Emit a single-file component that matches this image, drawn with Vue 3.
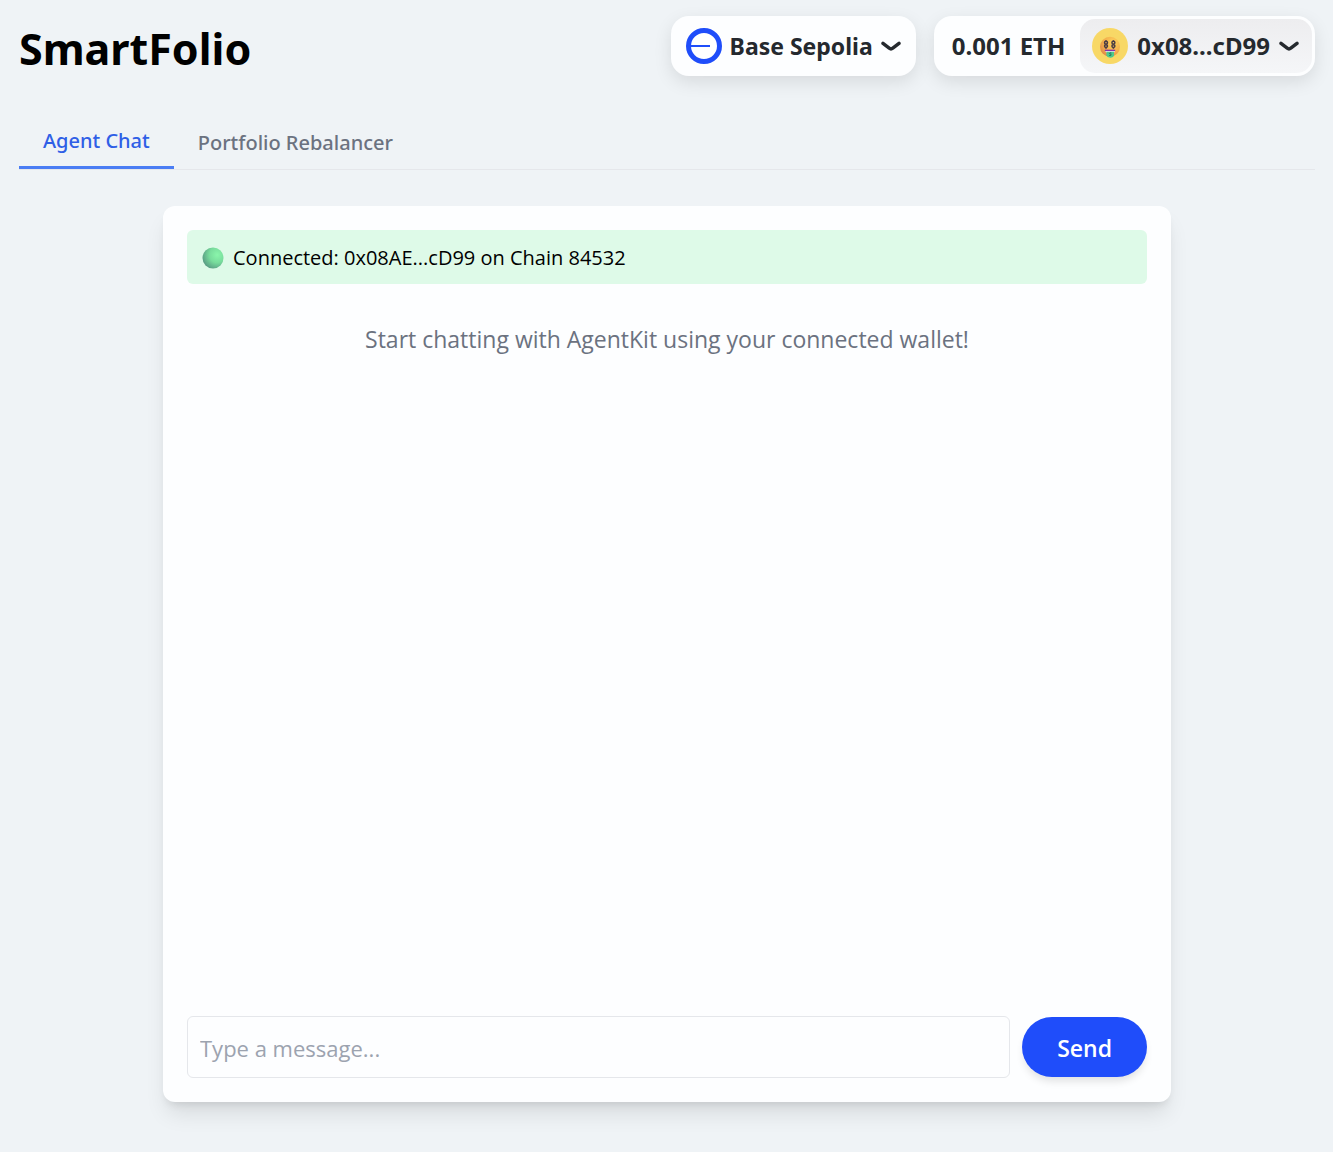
<script setup>
import { ref } from 'vue'

const tabs = ['Agent Chat', 'Portfolio Rebalancer']
const activeTab = ref(tabs[0])
const message = ref('')
</script>

<template>
  <div class="page">
    <header class="header">
      <h1 class="title">SmartFolio</h1>
      <div class="wallet">
        <button type="button" class="chain">
          <svg class="badge" viewBox="0 0 36 36" aria-hidden="true">
            <circle cx="18" cy="18" r="15.5" fill="#fff" stroke="#1f4dfa" stroke-width="5" />
            <path d="M4 18H24" stroke="#1f4dfa" stroke-width="2" />
          </svg>
          <span>Base Sepolia</span>
          <svg class="chevron" viewBox="0 0 20 12" aria-hidden="true">
            <path d="M2 3.4L8.2 8.2Q10 9.6 11.8 8.2L18 3.4" />
          </svg>
        </button>
        <button type="button" class="account">
          <span class="balance">0.001 ETH</span>
          <span class="address">
            <svg class="badge" viewBox="0 0 36 36" aria-hidden="true">
              <defs>
                <radialGradient id="face" cx="0.65" cy="0.3" r="0.8">
                  <stop offset="0" stop-color="#ffd45c" />
                  <stop offset="0.6" stop-color="#f3ad4c" />
                  <stop offset="1" stop-color="#dc8148" />
                </radialGradient>
              </defs>
              <circle cx="18" cy="18" r="18" fill="#f8d866" />
              <circle cx="18" cy="18.8" r="10" fill="url(#face)" />
              <g fill="none" stroke="#493b45" stroke-width="1.5">
                <ellipse cx="14" cy="14.7" rx="1.5" ry="1.4" />
                <ellipse cx="14" cy="18.1" rx="1.5" ry="1.4" />
                <path d="M14 12.2V13.6M14 19V20.8" />
                <ellipse cx="21.4" cy="14.7" rx="1.5" ry="1.4" />
                <ellipse cx="21.4" cy="18.1" rx="1.5" ry="1.4" />
                <path d="M21.4 12.2V13.6M21.4 19V20.8" />
              </g>
              <path d="M13 22.2H23.2Q23 25 18 25.5Q13.5 25 13 22.2Z" fill="#fff" />
              <path d="M12.8 22.4H23.2" stroke="#8c31a9" stroke-width="1.5" />
              <path d="M14.4 23.8H22V27.2Q21.6 29.6 18.2 29.8Q15 29.6 14.4 27.2Z" fill="#4cc98d" />
              <path d="M19.4 25Q17.4 24.5 17.4 25.5L19.2 26.6Q19.2 28 17.2 27.4" fill="none" stroke="#286f62" />
            </svg>
            <span>0x08...cD99</span>
            <svg class="chevron" viewBox="0 0 20 12" aria-hidden="true">
              <path d="M2 3.4L8.2 8.2Q10 9.6 11.8 8.2L18 3.4" />
            </svg>
          </span>
        </button>
      </div>
    </header>

    <nav class="tabs">
      <button
        v-for="tab in tabs"
        :key="tab"
        type="button"
        class="tab"
        :class="{ active: tab === activeTab }"
        @click="activeTab = tab"
      >{{ tab }}</button>
    </nav>

    <main class="card">
      <div class="status">
        <svg class="dot" viewBox="0 0 22 22" aria-hidden="true">
          <defs>
            <radialGradient id="orb" cx="0.7" cy="0.35" r="0.75">
              <stop offset="0" stop-color="#8af5ab" />
              <stop offset="0.5" stop-color="#78dc9c" />
              <stop offset="1" stop-color="#589a83" />
            </radialGradient>
          </defs>
          <circle cx="11" cy="11" r="10.5" fill="url(#orb)" />
        </svg>
        <span>Connected: 0x08AE...cD99 on Chain 84532</span>
      </div>
      <p class="hint">Start chatting with AgentKit using your connected wallet!</p>
      <form class="composer" @submit.prevent="message = ''">
        <input v-model="message" class="field" type="text" aria-label="Message" placeholder="Type a message..." />
        <button type="submit" class="send">Send</button>
      </form>
    </main>
  </div>
</template>

<style>
body {
  margin: 0;
  background: #eff3f6;
}
</style>

<style scoped>
.page {
  box-sizing: border-box;
  min-height: 100vh;
  padding: 16px 18px 50px 19px;
  display: flex;
  flex-direction: column;
  font-family: "Noto Sans", "Open Sans", sans-serif;
  color: #000;
}

button,
input {
  box-sizing: border-box;
  margin: 0;
  border: 0;
  font-family: inherit;
}

button {
  padding: 0;
  background: none;
  cursor: pointer;
}

.header {
  display: flex;
  justify-content: space-between;
  align-items: flex-start;
}

.title {
  margin: 0;
  font-size: 43px;
  line-height: 66px;
  font-weight: 700;
}

.wallet {
  display: flex;
  gap: 18px;
}

.chain,
.account {
  display: flex;
  align-items: center;
  height: 60px;
  border-radius: 18px;
  background: #fdfeff;
  box-shadow: 0 6px 18px rgba(0, 0, 0, 0.1);
  color: #25292e;
  line-height: 30px;
  font-weight: 700;
}

.chain {
  gap: 8px;
  padding: 0 15px;
  font-size: 23px;
}

.account {
  padding: 3px;
  font-size: 24px;
}

.balance {
  padding: 0 15px;
}

.address {
  box-sizing: border-box;
  display: flex;
  align-items: center;
  gap: 9px;
  height: 54px;
  padding: 0 13px 0 12px;
  border-radius: 15px;
  background: linear-gradient(#ededef, #f5f6f8);
}

.badge {
  width: 36px;
  height: 36px;
}

.chevron {
  width: 20px;
  height: 12px;
  fill: none;
  stroke: #25292e;
  stroke-width: 3.4;
  stroke-linecap: round;
}

.tabs {
  display: flex;
  margin-top: 32px;
  border-bottom: 1px solid #e5e7eb;
}

.tab {
  height: 55px;
  padding: 2px 24px 0;
  color: #6b7280;
  font-size: 20px;
  line-height: 30px;
  font-weight: 500;
}

.tab.active {
  border-bottom: 3px solid #4a7df4;
  color: #2f5fe6;
}

.card {
  box-sizing: border-box;
  flex: 1;
  width: 100%;
  max-width: 1008px;
  margin: 36px auto 0;
  padding: 24px;
  display: flex;
  flex-direction: column;
  border-radius: 12px;
  background: #fdfeff;
  box-shadow: 0 15px 22px -4px rgba(0, 0, 0, 0.1), 0 6px 9px -4px rgba(0, 0, 0, 0.1);
  font-family: "Open Sans", "Noto Sans", sans-serif;
}

.status {
  display: flex;
  align-items: center;
  gap: 9px;
  padding: 13px 15px 11px;
  border-radius: 6px;
  background: #defae8;
  font-size: 20px;
  line-height: 30px;
}

.dot {
  width: 22px;
  height: 22px;
}

.hint {
  flex: 1;
  margin: 37px 0;
  color: #6b7280;
  font-size: 23px;
  line-height: 36px;
  text-align: center;
}

.composer {
  display: flex;
  align-items: center;
  gap: 12px;
}

.field {
  flex: 1;
  min-width: 0;
  height: 62px;
  padding: 2px 12px 0;
  border: 1px solid #e5e7eb;
  border-radius: 6px;
  background: transparent;
  color: #000;
  font-size: 22px;
}

.field::placeholder {
  color: #9ca3af;
  opacity: 1;
}

.send {
  height: 60px;
  padding: 2px 35px 0;
  border-radius: 30px;
  background: #1f4dfa;
  box-shadow: 0 6px 9px -2px rgba(0, 0, 0, 0.12);
  color: #fff;
  font-size: 23px;
  font-weight: 600;
}
</style>
